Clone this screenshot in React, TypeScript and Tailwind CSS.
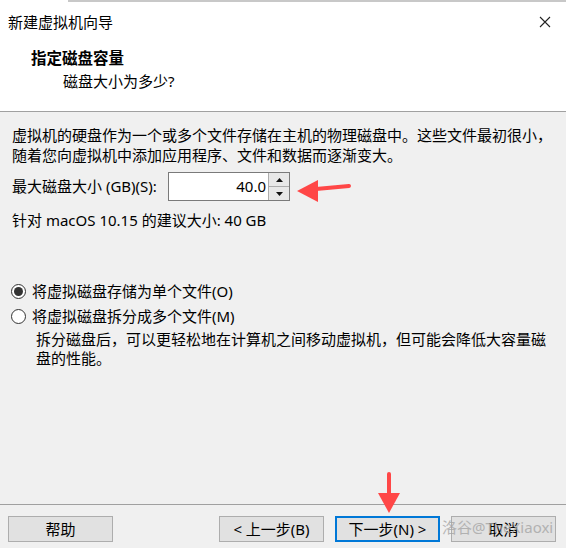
import React from "react";

const font = { fontFamily: '"Noto Sans", "Noto Sans CJK SC", sans-serif' };

const Radio = ({ checked, label }: { checked?: boolean; label: string }) => (
  <div className="flex items-center h-[20px]">
    <span className="ml-[-1px] w-[15px] h-[15px] rounded-full border border-[#333] bg-white flex items-center justify-center">
      {checked && <span className="w-[9px] h-[9px] rounded-full bg-[#333]" />}
    </span>
    <span className="ml-[6px]">{label}</span>
  </div>
);

const Button = ({ children, primary }: { children: React.ReactNode; primary?: boolean }) => (
  <button
    className={
      "w-[105px] h-[26px] bg-[#e1e1e1] flex items-center justify-center text-[15px] leading-none text-black " +
      (primary ? "border-2 border-[#0078d7]" : "border border-[#adadad]")
    }
  >
    {children}
  </button>
);

export default function App() {
  return (
    <div
      className="relative w-[566px] h-[548px] bg-[#f0f0f0] flex flex-col text-[15px] text-black overflow-hidden"
      style={font}
    >
      <div className="h-[2px] flex">
        <div className="w-[68px] bg-white" />
        <div className="flex-1 bg-[#c8c8c8]" />
      </div>

      <div className="bg-white h-[109px]">
        <div className="h-[40px] flex items-center justify-between pl-2 pr-[15px]">
          <span className="leading-[20px]">新建虚拟机向导</span>
          <svg width="12" height="12" viewBox="0 0 12 12">
            <path d="M1 1 L11 11 M11 1 L1 11" stroke="#222" strokeWidth="1.1" />
          </svg>
        </div>
        <div className="pl-[31px] mt-[6px] leading-[20px] font-bold text-[15.5px]">指定磁盘容量</div>
        <div className="pl-[63px] mt-[3px] leading-[20px]">磁盘大小为多少?</div>
      </div>
      <div className="h-px bg-[#a0a0a0]" />

      <div className="flex-1 px-3 pt-[14px]">
        <div className="leading-[19.5px] whitespace-nowrap">
          虚拟机的硬盘作为一个或多个文件存储在主机的物理磁盘中。这些文件最初很小，
          <br />
          随着您向虚拟机中添加应用程序、文件和数据而逐渐变大。
        </div>

        <div className="mt-[7px] flex items-center">
          <span className="w-[156px] whitespace-nowrap">最大磁盘大小 (GB)(S):</span>
          <div className="flex h-[29px] border border-[#7a7a7a] bg-white">
            <div className="w-[99px] flex items-center justify-end pr-[2px]">40.0</div>
            <div className="w-[21px] flex flex-col bg-[#f0f0f0] border-l border-[#adadad]">
              <div className="flex-1 flex items-center justify-center border-b border-[#adadad] bg-[#e8e8e8]">
                <svg width="7" height="4" viewBox="0 0 7 4">
                  <path d="M0 4 L3.5 0 L7 4 Z" fill="#111" />
                </svg>
              </div>
              <div className="flex-1 flex items-center justify-center bg-[#e8e8e8]">
                <svg width="7" height="4" viewBox="0 0 7 4">
                  <path d="M0 0 L7 0 L3.5 4 Z" fill="#111" />
                </svg>
              </div>
            </div>
          </div>
        </div>

        <div className="mt-[10px] leading-[19px]">针对 macOS 10.15 的建议大小: 40 GB</div>

        <div className="mt-[51px]">
          <Radio checked label="将虚拟磁盘存储为单个文件(O)" />
          <div className="mt-[5px]">
            <Radio label="将虚拟磁盘拆分成多个文件(M)" />
          </div>
          <div className="mt-[4px] pl-[24px] leading-[19px] whitespace-nowrap">
            拆分磁盘后，可以更轻松地在计算机之间移动虚拟机，但可能会降低大容量磁
            <br />
            盘的性能。
          </div>
        </div>
      </div>

      <div className="h-px bg-[#a0a0a0]" />
      <div className="mt-[11px] mb-[6px] flex px-2 pr-[10px]">
        <Button>帮助</Button>
        <div className="flex-1" />
        <div className="flex gap-[11px]">
          <Button>&lt; 上一步(B)</Button>
          <Button primary>下一步(N) &gt;</Button>
          <Button>取消</Button>
        </div>
      </div>

      <div className="absolute left-[442px] top-[517px] text-[15px] leading-[20px] text-[#a6a6a6] opacity-80 pointer-events-none">
        洛谷@TheXiaoxi
      </div>

      <svg className="absolute left-0 top-0 pointer-events-none" width="566" height="548">
        <path d="M316 189 L349 186" stroke="#ff4747" strokeWidth="4" strokeLinecap="round" />
        <path d="M297 191 L318 180 L318 202 Z" fill="#ff4747" />
        <path d="M389 474 L389 495" stroke="#ff4747" strokeWidth="4" strokeLinecap="round" />
        <path d="M378 493 L400 493 L389 513 Z" fill="#ff4747" />
      </svg>
    </div>
  );
}
